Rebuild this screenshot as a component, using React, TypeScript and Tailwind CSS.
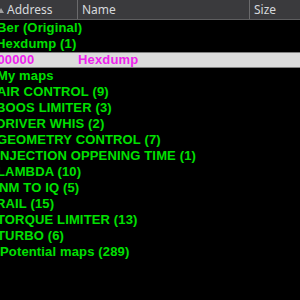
import React from "react";

type Row = { text: string; x: number; sel?: boolean };

const rows: Row[] = [
  { text: "Ber (Original)", x: -3 },
  { text: "Hexdump (1)", x: -4 },
  { text: "", x: 0, sel: true },
  { text: "My maps", x: -3 },
  { text: "AIR CONTROL (9)", x: -3 },
  { text: "BOOS LIMITER (3)", x: -4 },
  { text: "DRIVER WHIS (2)", x: -4 },
  { text: "GEOMETRY CONTROL (7)", x: -3 },
  { text: "NJECTION OPPENING TIME (1)", x: 0 },
  { text: "LAMBDA (10)", x: -3 },
  { text: "NM TO IQ (5)", x: -1 },
  { text: "RAIL (15)", x: -4 },
  { text: "TORQUE LIMITER (13)", x: -3 },
  { text: "TURBO (6)", x: -3 },
  { text: "Potential maps (289)", x: 0 },
];

export default function App() {
  return (
    <div className="w-[300px] h-[300px] bg-black overflow-hidden flex flex-col">
      <div
        className="flex h-[20px] shrink-0 bg-[#3a3a3d] border-b border-[#5e5e60] text-[12px] text-[#d6d9dc]"
        style={{ fontFamily: '"Noto Sans", "Open Sans", sans-serif' }}
      >
        <div className="w-[77px] shrink-0 flex items-center relative">
          <svg width="6" height="5" viewBox="0 0 6 5" className="absolute left-[-2px] top-[8px]">
            <path d="M0 5 L3 0 L6 5 Z" fill="#a0a0a0" />
          </svg>
          <span className="pl-[7px] leading-none">Address</span>
        </div>
        <div className="w-px shrink-0 bg-[#6a6a6c]" />
        <div className="w-[171px] shrink-0 flex items-center">
          <span className="pl-[4px] leading-none">Name</span>
        </div>
        <div className="w-px shrink-0 bg-[#6a6a6c]" />
        <div className="flex-1 flex items-center">
          <span className="pl-[4px] leading-none">Size</span>
        </div>
      </div>
      <div
        className="flex flex-col text-[13px] font-bold tracking-[0.15px] text-[#00e000]"
        style={{ fontFamily: '"Liberation Sans", Arial, sans-serif' }}
      >
        {rows.map((r, i) =>
          r.sel ? (
            <div
              key={i}
              className="h-[16px] flex items-center bg-[#dcdcdc] border-y border-[#808080] text-[#ee22ee] whitespace-nowrap"
            >
              <span className="w-[88px] shrink-0 ml-[-10px]">000000</span>
              <span>Hexdump</span>
            </div>
          ) : (
            <div key={i} className="h-[16px] flex items-center whitespace-nowrap">
              <span style={{ marginLeft: r.x }}>{r.text}</span>
            </div>
          )
        )}
      </div>
    </div>
  );
}
